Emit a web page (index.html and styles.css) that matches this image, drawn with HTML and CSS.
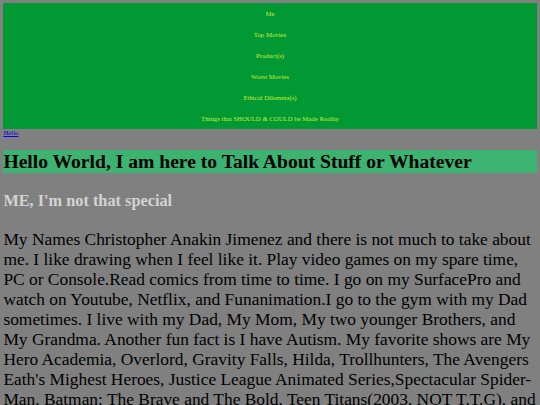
FILE: index.html
```html
<!DOCTYPE html>
<html lang="en">
<head>
<meta charset="utf-8">
<title>Hello World</title>
<link rel="stylesheet" href="styles.css">
</head>
<body>
<nav class="topnav">
  <ul class="nav-list">
    <li class="nav-item"><a class="nav-link" href="#me">Me</a></li>
    <li class="nav-item"><a class="nav-link" href="#top">Top Movies</a></li>
    <li class="nav-item"><a class="nav-link" href="#products">Product(s)</a></li>
    <li class="nav-item"><a class="nav-link" href="#worst">Worst Movies</a></li>
    <li class="nav-item"><a class="nav-link" href="#ethics">Ethical Dilemma(s)</a></li>
    <li class="nav-item"><a class="nav-link" href="#reality">Things that SHOULD &amp; COULD be Made Reality</a></li>
  </ul>
</nav>
<a class="hello-link" href="#hello">Hello</a>
<h1 class="main-title">Hello World, I am here to Talk About Stuff or Whatever</h1>
<h2 class="sub-title">ME, I'm not that special</h2>
<p class="about">My Names Christopher Anakin Jimenez and there is not much to take about me. I like drawing when I feel like it. Play video games on my spare time, PC or Console.Read comics from time to time. I go on my SurfacePro and watch on Youtube, Netflix, and Funanimation.I go to the gym with my Dad sometimes. I live with my Dad, My Mom, My two younger Brothers, and My Grandma. Another fun fact is I have Autism. My favorite shows are My Hero Academia, Overlord, Gravity Falls, Hilda, Trollhunters, The Avengers Eath's Mighest Heroes, Justice League Animated Series,Spectacular Spider-Man, Batman: The Brave and The Bold, Teen Titans(2003, NOT T.T.G), and many more that I watch from time to time.</p>
</body>
</html>
```

FILE: styles.css
```css
html {
  background: #808080;
}
body {
  margin: 3.4px;
  font-family: "Liberation Serif", "Times New Roman", serif;
  font-size: 6.75px;
  color: #000;
  background: #808080;
}
.topnav {
  background: #009933;
}
.nav-list {
  list-style: none;
  margin: 0;
  padding: 0;
}
.nav-item {
  height: 21px;
  display: flex;
  align-items: center;
  justify-content: center;
}
.nav-link {
  color: #ccee33;
  text-decoration: none;
  font-size: 6.75px;
}
.hello-link {
  color: #0000ee;
  text-decoration: underline;
  font-size: 6.75px;
}
.main-title {
  background: #3cb371;
  font-size: 19.6px;
  line-height: 23px;
  font-weight: bold;
  margin: 13.6px 0 18.5px;
}
.sub-title {
  color: #d3d3d3;
  font-size: 16.3px;
  font-weight: bold;
  margin: 18.5px 0 13.5px;
}
.about {
  font-size: 17.4px;
  line-height: 20px;
  margin: 18px 0;
}
```
